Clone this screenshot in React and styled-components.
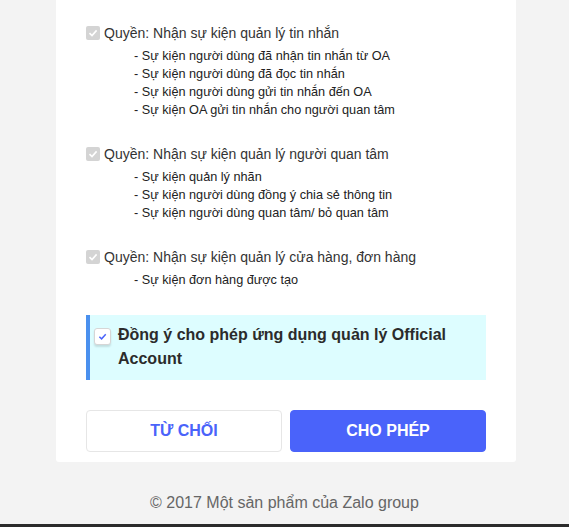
import React from "react";
import styled, { createGlobalStyle } from "styled-components";

const GlobalStyle = createGlobalStyle`
  html, body {
    margin: 0;
    padding: 0;
    background: #f3f3f3;
    font-family: Arial, "Liberation Sans", sans-serif;
  }
`;

const Page = styled.div`
  width: 569px;
  height: 527px;
  display: flex;
  flex-direction: column;
  overflow: hidden;
`;

const Card = styled.div`
  width: 460px;
  margin-left: 56px;
  background: #fff;
  border-radius: 0 0 3px 3px;
  padding: 23px 30px 10px;
  box-sizing: border-box;
`;

const Section = styled.div`
  margin-bottom: 25px;
`;

const Heading = styled.label`
  display: flex;
  align-items: center;
  gap: 4px;
  font-size: 14px;
  line-height: 20px;
  color: #333;
`;

const GrayBox = styled.span`
  width: 14px;
  height: 14px;
  border-radius: 2px;
  background: #d4d4d4;
  display: flex;
  align-items: center;
  justify-content: center;
  flex-shrink: 0;
`;

const SubList = styled.ul`
  list-style: none;
  margin: 4px 0 0;
  padding: 0 0 0 48px;
`;

const SubItem = styled.li`
  font-size: 12.7px;
  line-height: 18px;
  color: #222;
`;

const Agree = styled.div`
  display: flex;
  align-items: flex-start;
  gap: 7px;
  margin-top: 26px;
  background: #ddfdff;
  border-left: 4px solid #4a90ee;
  padding: 8px 12px 9px 4px;
`;

const AgreeBox = styled.span`
  width: 15px;
  height: 15px;
  margin-top: 5px;
  border: 1px solid #d6d6d6;
  border-radius: 3px;
  background: #fff;
  box-shadow: 0 2px 2px rgba(0, 0, 0, 0.12);
  display: flex;
  align-items: center;
  justify-content: center;
  flex-shrink: 0;
`;

const AgreeText = styled.span`
  font-size: 16px;
  line-height: 24px;
  font-weight: bold;
  color: #2b2b2b;
`;

const Buttons = styled.div`
  display: grid;
  grid-template-columns: 1fr 1fr;
  gap: 8px;
  margin-top: 30px;
`;

const Button = styled.button`
  height: 42px;
  border-radius: 4px;
  font-family: Arial, "Liberation Sans", sans-serif;
  font-size: 16px;
  font-weight: bold;
  cursor: pointer;
  border: 1px solid ${(p) => (p.$primary ? "#4a63fa" : "#e6e6e6")};
  background: ${(p) => (p.$primary ? "#4a63fa" : "#fff")};
  color: ${(p) => (p.$primary ? "#fff" : "#4a63fa")};
`;

const Footer = styled.div`
  flex: 1;
  display: flex;
  align-items: center;
  justify-content: center;
  padding-top: 20px;
  box-sizing: border-box;
  font-size: 16px;
  color: #666;
`;

const BottomBar = styled.div`
  height: 3px;
  background: #2b2b2b;
`;

const Check = ({ color, size = 10 }) => (
  <svg width={size} height={size} viewBox="0 0 10 10">
    <path d="M1.5 5.2 L4 7.6 L8.6 2.4" fill="none" stroke={color} strokeWidth="1.6" />
  </svg>
);

const permissions = [
  {
    title: "Quyền: Nhận sự kiện quản lý tin nhắn",
    items: [
      "Sự kiện người dùng đã nhận tin nhắn từ OA",
      "Sự kiện người dùng đã đọc tin nhắn",
      "Sự kiện người dùng gửi tin nhắn đến OA",
      "Sự kiện OA gửi tin nhắn cho người quan tâm",
    ],
  },
  {
    title: "Quyền: Nhận sự kiện quản lý người quan tâm",
    items: [
      "Sự kiện quản lý nhãn",
      "Sự kiện người dùng đồng ý chia sẻ thông tin",
      "Sự kiện người dùng quan tâm/ bỏ quan tâm",
    ],
  },
  {
    title: "Quyền: Nhận sự kiện quản lý cửa hàng, đơn hàng",
    items: ["Sự kiện đơn hàng được tạo"],
  },
];

export default function App() {
  return (
    <Page>
      <GlobalStyle />
      <Card>
        {permissions.map((perm) => (
          <Section key={perm.title}>
            <Heading>
              <GrayBox>
                <Check color="#fff" />
              </GrayBox>
              {perm.title}
            </Heading>
            <SubList>
              {perm.items.map((item) => (
                <SubItem key={item}>- {item}</SubItem>
              ))}
            </SubList>
          </Section>
        ))}
        <Agree>
          <AgreeBox>
            <Check color="#4a63fa" size={9} />
          </AgreeBox>
          <AgreeText>Đồng ý cho phép ứng dụng quản lý Official Account</AgreeText>
        </Agree>
        <Buttons>
          <Button>TỪ CHỐI</Button>
          <Button $primary>CHO PHÉP</Button>
        </Buttons>
      </Card>
      <Footer>© 2017 Một sản phẩm của Zalo group</Footer>
      <BottomBar />
    </Page>
  );
}
